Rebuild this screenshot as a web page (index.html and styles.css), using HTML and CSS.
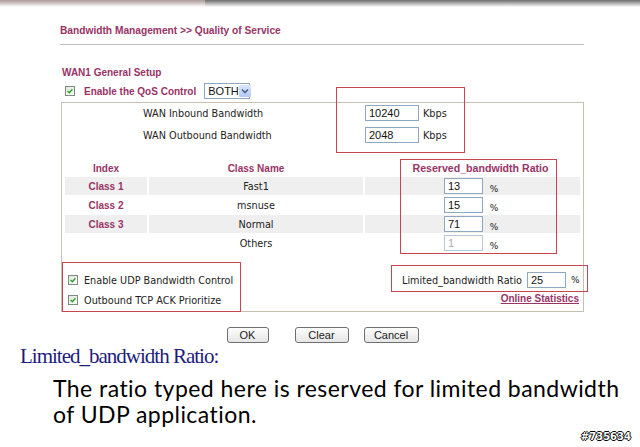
FILE: index.html
```html
<!DOCTYPE html>
<html lang="en">
<head>
    <meta charset="UTF-8">
    <title>Quality of Service</title>
    <link rel="stylesheet" href="styles.css">
</head>
<body>
<div class="screen">
    <div class="topbar"><div class="topbar-left"></div><div class="topbar-right"></div></div>

    <div class="page">
        <h1 class="title">Bandwidth Management &gt;&gt; Quality of Service</h1>
        <div class="rule"></div>

        <h2 class="section">WAN1 General Setup</h2>
        <div class="qos-row">
            <span class="cb"><svg viewBox="0 0 10 10"><path d="M2 5 L4.2 7.2 L8 2.8" /></svg></span>
            <span class="qos-label">Enable the QoS Control</span>
            <div class="select">BOTH<span class="select-btn"><svg viewBox="0 0 8 6"><path d="M1 1.5 L4 4.5 L7 1.5" /></svg></span></div>
        </div>

        <div class="panel">
            <div class="bw-grid">
                <span class="bw-label">WAN Inbound Bandwidth</span>
                <span class="field"><span class="input w54">10240</span><span class="unit">Kbps</span></span>
                <span class="bw-label">WAN Outbound Bandwidth</span>
                <span class="field"><span class="input w54">2048</span><span class="unit">Kbps</span></span>
            </div>

            <table class="classes">
                <tr class="head">
                    <th class="c-index">Index</th>
                    <th class="c-name">Class Name</th>
                    <th class="c-ratio">Reserved_bandwidth Ratio</th>
                </tr>
                <tr class="shade">
                    <td class="idx">Class 1</td><td>Fast1</td>
                    <td><span class="input w39">13</span><span class="pct">%</span></td>
                </tr>
                <tr>
                    <td class="idx">Class 2</td><td>msnuse</td>
                    <td><span class="input w39">15</span><span class="pct">%</span></td>
                </tr>
                <tr class="shade">
                    <td class="idx">Class 3</td><td>Normal</td>
                    <td><span class="input w39">71</span><span class="pct">%</span></td>
                </tr>
                <tr>
                    <td class="idx"></td><td>Others</td>
                    <td><span class="input w39 disabled">1</span><span class="pct">%</span></td>
                </tr>
            </table>

            <div class="panel-foot">
                <div class="checks">
                    <div class="check-row">
                        <span class="cb"><svg viewBox="0 0 10 10"><path d="M2 5 L4.2 7.2 L8 2.8" /></svg></span>
                        <span>Enable UDP Bandwidth Control</span>
                    </div>
                    <div class="check-row">
                        <span class="cb"><svg viewBox="0 0 10 10"><path d="M2 5 L4.2 7.2 L8 2.8" /></svg></span>
                        <span>Outbound TCP ACK Prioritize</span>
                    </div>
                </div>
                <div class="limits">
                    <div class="limit-row">
                        <span class="limit-label">Limited_bandwidth Ratio</span>
                        <span class="input w39">25</span>
                        <span class="pct wide">%</span>
                    </div>
                    <a class="stats" href="#">Online Statistics</a>
                </div>
            </div>
        </div>

        <div class="buttons">
            <button class="btn ok">OK</button>
            <button class="btn clear">Clear</button>
            <button class="btn cancel">Cancel</button>
        </div>
    </div>

    <div class="note">
        <div class="note-title">Limited_bandwidth Ratio:</div>
        <div class="note-text">
            <div>The ratio typed here is reserved for limited bandwidth</div>
            <div>of UDP application.</div>
        </div>
        <div class="mark">#735634</div>
    </div>

    <!-- red annotation frames drawn over the form -->
    <div class="frame f-bandwidth"></div>
    <div class="frame f-ratio"></div>
    <div class="frame f-checks"></div>
    <div class="frame f-limit"></div>
</div>
</body>
</html>
```

FILE: styles.css
```css
:root {
    --maroon: #993366;
    --frame: #c84450;
    --field-border: #8fa8c0;
}

body {
    margin: 0;
    background: #fff;
    color: #222;
    font-family: 'DejaVu Sans', Verdana, sans-serif;
    font-size: 9.7px;
}

.screen {
    position: relative;
    width: 640px;
    height: 447px;
    overflow: hidden;
}

.topbar {
    display: flex;
    height: 7px;
}

.topbar-left {
    width: 205px;
    background: linear-gradient(#a89a98, #d8d0ce 55%, #fff);
}

.topbar-right {
    flex: 1;
    background: linear-gradient(#6e6e6e, #bcbcbc 55%, #fff);
}

.page {
    padding: 0 56px 0 61px;
}

.title,
.section {
    margin: 0;
    font-family: 'Liberation Sans', Arial, sans-serif;
    font-size: 10px;
    font-weight: bold;
    color: var(--maroon);
    line-height: 14px;
}

.title {
    margin: 17px 0 0 -1px;
    font-size: 10.2px;
}

.rule {
    margin: 6px 0 0 -1px;
    border-top: 1px solid #bdbdbd;
}

.section {
    margin-top: 21px;
    padding-left: 1px;
}

.qos-row {
    display: flex;
    align-items: center;
    height: 16px;
    margin-top: 3px;
    padding-left: 4px;
}

.qos-label {
    margin-left: 9px;
    font-family: 'Liberation Sans', Arial, sans-serif;
    font-size: 10px;
    font-weight: bold;
    color: var(--maroon);
}

.cb {
    display: inline-block;
    width: 10px;
    height: 10px;
    box-sizing: border-box;
    border: 1px solid #7c8c80;
    background: linear-gradient(135deg, #dfe6d8, #fff);
    flex: none;
}

.cb svg {
    display: block;
    width: 8px;
    height: 8px;
}

.cb path {
    fill: none;
    stroke: #22a022;
    stroke-width: 1.6;
}

.select {
    display: flex;
    align-items: center;
    justify-content: space-between;
    width: 46px;
    height: 16px;
    margin-left: 8px;
    box-sizing: border-box;
    border: 1px solid var(--field-border);
    padding-left: 3px;
    font-family: 'Liberation Sans', Arial, sans-serif;
    font-size: 11px;
    color: #111;
}

.select-btn {
    width: 12px;
    height: 12px;
    margin-right: 1px;
    background: linear-gradient(#dbe6fd, #b4c8f6);
    border-radius: 1px;
}

.select-btn svg {
    display: block;
    width: 8px;
    height: 6px;
    margin: 3px 2px;
}

.select-btn path {
    fill: none;
    stroke: #4d6185;
    stroke-width: 1.6;
}

.panel {
    margin-top: 3px;
    border: 1px solid #c8c0b0;
    padding-bottom: 1px;
}

.bw-grid {
    display: grid;
    grid-template-columns: 222px auto;
    grid-auto-rows: 16px;
    row-gap: 6px;
    align-items: center;
    padding: 2px 0 0 81px;
}

.field {
    display: flex;
    align-items: center;
}

.input {
    display: inline-block;
    height: 16px;
    box-sizing: border-box;
    border: 1px solid var(--field-border);
    padding: 0 3px;
    background: #fff;
    font-family: 'Liberation Sans', Arial, sans-serif;
    font-size: 11px;
    line-height: 14px;
    color: #111;
    text-align: left;
    vertical-align: middle;
}

.input.disabled {
    color: #aaa;
    border-color: #b8c8d8;
}

.w54 { width: 54px; }
.w39 { width: 39px; }

.unit {
    margin-left: 4px;
}

.pct {
    display: inline-block;
    width: 14px;
    margin-left: 4px;
    font-size: 9px;
    vertical-align: -3px;
}

.classes {
    margin: 16px 1px 0;
    width: 519px;
    border-spacing: 2px 1px;
    table-layout: fixed;
}

.classes th,
.classes td {
    padding: 0;
    text-align: center;
}

.classes th {
    height: 16px;
    font-family: 'Liberation Sans', Arial, sans-serif;
    font-size: 10px;
    font-weight: bold;
    color: var(--maroon);
}

.classes td {
    height: 18px;
}

.c-index { width: 82px; }
.c-name { width: 214px; }

.classes th.c-ratio {
    padding-left: 16px;
    font-size: 10.6px;
}

.classes .shade td {
    background: #efefef;
}

.classes td.idx {
    font-family: 'Liberation Sans', Arial, sans-serif;
    font-size: 10px;
    font-weight: bold;
    color: var(--maroon);
}

.panel-foot {
    display: flex;
    justify-content: space-between;
    margin-top: 17px;
    padding: 0 4px 0 6px;
}

.check-row {
    display: flex;
    align-items: center;
    gap: 6px;
    height: 20px;
}

.limits {
    display: flex;
    flex-direction: column;
    align-items: flex-end;
}

.limit-row {
    display: flex;
    align-items: center;
    height: 20px;
}

.limit-label {
    margin-right: 5px;
}

.pct.wide {
    width: 8px;
    margin-left: 5px;
    vertical-align: 0;
}

.stats {
    height: 20px;
    line-height: 18px;
    font-family: 'Liberation Sans', Arial, sans-serif;
    font-size: 10px;
    font-weight: bold;
    color: var(--maroon);
}

.buttons {
    display: flex;
    justify-content: center;
    margin-top: 15px;
}

.btn {
    height: 16px;
    padding: 0;
    border: 1px solid #6f6f6f;
    border-radius: 3px;
    background: linear-gradient(#fdfdfd, #e6e6e6);
    font-family: 'Liberation Sans', Arial, sans-serif;
    font-size: 11px;
    color: #222;
}

.ok { width: 42px; }
.clear { width: 54px; margin-left: 26px; }
.cancel { width: 55px; margin-left: 15px; }

.note {
    padding-left: 20px;
}

.note-title {
    margin-top: 1px;
    font-family: 'Liberation Serif', 'Times New Roman', serif;
    font-size: 21px;
    line-height: 24px;
    letter-spacing: -1px;
    color: #1c1c7c;
}

.note-text {
    margin: 7px 0 0 33px;
    font-family: Lato, 'Noto Sans', sans-serif;
    font-size: 23px;
    letter-spacing: 0.45px;
    line-height: 26px;
    color: #000;
}

.mark {
    margin-top: 4px;
    padding-right: 9px;
    text-align: right;
    font-family: 'DejaVu Sans', sans-serif;
    font-size: 10px;
    font-weight: bold;
    line-height: 12px;
    color: #fff;
    text-shadow: 1px 0 #000, -1px 0 #000, 0 1px #000, 0 -1px #000;
}

.frame {
    position: absolute;
    border: 1px solid var(--frame);
    box-sizing: border-box;
    pointer-events: none;
}

.f-bandwidth { left: 336px; top: 87px; width: 129px; height: 66px; }
.f-ratio { left: 400px; top: 159px; width: 157px; height: 95px; }
.f-checks { left: 62px; top: 262px; width: 179px; height: 50px; }
.f-limit { left: 391px; top: 265px; width: 197px; height: 27px; }
```
